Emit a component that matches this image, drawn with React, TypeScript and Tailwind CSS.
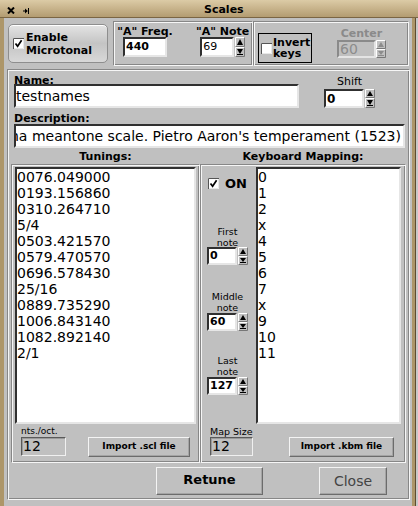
import React from 'react';

const down = 'border-2 border-t-[#303030] border-l-[#303030] border-r-[#e6e6e6] border-b-[#e6e6e6] bg-white';
const up = 'border border-t-[#f4f4f4] border-l-[#f4f4f4] border-r-[#6c6c6c] border-b-[#6c6c6c] shadow-[inset_-1px_-1px_0_#a4a4a4]';
const frame = 'border border-t-[#878787] border-l-[#878787] border-r-[#f6f6f6] border-b-[#f6f6f6] shadow-[inset_1px_1px_0_#f6f6f6,inset_-1px_-1px_0_#878787]';
const well = 'border border-t-[#5a5a5a] border-l-[#5a5a5a] border-r-[#f0f0f0] border-b-[#f0f0f0] shadow-[inset_1px_1px_0_#9a9a9a]';

const tunings = [
  '0076.049000',
  '0193.156860',
  '0310.264710',
  '5/4',
  '0503.421570',
  '0579.470570',
  '0696.578430',
  '25/16',
  '0889.735290',
  '1006.843140',
  '1082.892140',
  '2/1',
];
const keys = ['0', '1', '2', 'x', '4', '5', '6', '7', 'x', '9', '10', '11'];

function Check({ on = false }: { on?: boolean }) {
  return (
    <svg width="11" height="11" viewBox="0 0 11 11" className="shrink-0 block">
      <rect width="11" height="11" fill="#fff" />
      <path d="M0.5 11V0.5H11" stroke="#555" fill="none" />
      <path d="M10.5 1V10.5H1" stroke="#e8e8e8" fill="none" />
      {on && <path d="M2.5 5.5L4.6 8.3L8.6 2.2" stroke="#000" strokeWidth="1.7" fill="none" />}
    </svg>
  );
}

function Spin({ h = 19, dim = false }: { h?: number; dim?: boolean }) {
  const c = dim ? '#8c8c8c' : '#000';
  const m = Math.floor(h / 2);
  return (
    <svg width={10} height={h} viewBox={`0 0 10 ${h}`} className="shrink-0 block">
      <rect width="10" height={h} fill="#c0c0c0" />
      <path d={`M0.5 ${m}V0.5H9.5`} stroke="#fff" fill="none" />
      <path d={`M9.5 0.5V${m - 0.5}H0.5`} stroke="#777" fill="none" />
      <path d={`M0.5 ${h}V${m + 0.5}H9.5`} stroke="#fff" fill="none" />
      <path d={`M9.5 ${m + 0.5}V${h - 0.5}H0.5`} stroke="#777" fill="none" />
      <path d={`M5 2L8 ${m - 2}H2Z`} fill={c} />
      <path d={`M2 ${m + 2}H8L5 ${h - 3}Z`} fill={c} />
      <path d={`M2 ${h - 2.5}H8`} stroke={c} />
    </svg>
  );
}

function NoteBox({ label, value, top, inTop }: { label: string; value: string; top: string; inTop: string }) {
  return (
    <div className={`ml-[6px] w-[41px] flex flex-col items-center ${top}`}>
      <div className="text-[9.5px] leading-[11px] text-center">
        {label}
        <br />
        note
      </div>
      <div className={`flex items-start gap-[1px] ${inTop}`}>
        <div className={`w-[30px] h-[18px] ${down} flex items-center pl-[1px] text-[11px] font-bold`}>{value}</div>
        <Spin h={18} />
      </div>
    </div>
  );
}

export default function App() {
  return (
    <div className="w-[418px] h-[506px] flex flex-col overflow-hidden bg-[#ad9669] font-['DejaVu_Sans',sans-serif] text-black">
      {/* title bar */}
      <div className="h-[18px] shrink-0 flex items-start bg-gradient-to-b from-[#dccba6] to-[#b39c71] border-b border-[#7a6543]">
        <svg className="ml-[7px] mt-[7px] block" width="8" height="7" viewBox="0 0 8 7">
          <path d="M1 0.5L7 6.5M7 0.5L1 6.5" stroke="#000" strokeWidth="2" />
        </svg>
        <svg className="ml-[8px] mt-[8px] block" width="6" height="6" viewBox="0 0 6 6">
          <path d="M0 3H3" stroke="#000" />
          <path d="M2 0.5L4.8 3L2 5.5Z" fill="#000" />
          <path d="M5.5 0V6" stroke="#000" />
        </svg>
        <span className="ml-[175px] mt-[4px] text-[11px] font-bold leading-[11px]">Scales</span>
      </div>

      <div className="flex flex-1">
        <div className="w-[4px] bg-[#ad9669]" />
        <div className="w-[408px] bg-[#c0c0c0] flex flex-col">
          {/* top row */}
          <div className="flex items-start mt-[3px]">
            <div className="ml-[4px] mt-[3px] w-[100px] h-[39px] rounded-[5px] border border-[#8e8e8e] bg-gradient-to-b from-[#e4e4e4] via-[#c4c4c4] to-[#d8d8d8] shadow-[inset_0_1px_0_#fff] flex items-center pl-[4px]">
              <Check on />
              <div className="ml-[2px] text-[11px] font-bold leading-[13px]">
                Enable
                <br />
                Microtonal
              </div>
            </div>

            <div className={`ml-[5px] w-[140px] h-[45px] ${frame} flex items-start`}>
              <div className="ml-[9px] w-[44px] flex flex-col items-center">
                <div className="mt-[4px] h-[11px] leading-[11px] text-[11px] font-bold whitespace-nowrap">"A" Freq.</div>
                <div className={`w-[44px] h-[20px] ${down} flex items-center pl-[1px] text-[11px] font-bold`}>440</div>
              </div>
              <div className="ml-[29px] flex flex-col items-center">
                <div className="mt-[4px] h-[11px] leading-[11px] text-[11px] font-bold whitespace-nowrap">"A" Note</div>
                <div className="flex items-start gap-[1px]">
                  <div className={`w-[34px] h-[20px] ${down} flex items-center pl-[1px] text-[11px]`}>69</div>
                  <Spin h={20} />
                </div>
              </div>
            </div>

            <div className={`w-[156px] h-[45px] ${frame} flex items-start`}>
              <div className="ml-[4px] mt-[11px] w-[54px] h-[30px] border border-black flex items-center pl-[2px]">
                <Check />
                <div className="ml-[1px] text-[11px] font-bold leading-[11px]">
                  Invert
                  <br />
                  keys
                </div>
              </div>
              <div className="ml-[25px] flex flex-col items-center">
                <div className="mt-[6px] h-[11px] leading-[11px] text-[11px] font-bold text-[#8a8a8a]">Center</div>
                <div className="mt-[1px] flex items-start">
                  <div className="w-[39px] h-[18px] border-2 border-t-[#8a8a8a] border-l-[#8a8a8a] border-r-[#e4e4e4] border-b-[#e4e4e4] flex items-center pl-[1px] text-[14px] text-[#8c8c8c]">
                    60
                  </div>
                  <Spin h={18} dim />
                </div>
              </div>
            </div>
          </div>

          {/* main frame */}
          <div className={`ml-[3px] mt-[3px] w-[403px] h-[431px] ${frame} flex flex-col`}>
            <div className="flex items-start">
              <div className="ml-[6px] flex flex-col">
                <div className="mt-[5px] h-[9px] leading-[11px] text-[11px] font-bold">Name:</div>
                <div className={`w-[285px] h-[24px] ${down} flex items-center text-[14px]`}>testnames</div>
              </div>
              <div className="ml-[25px] flex flex-col items-center">
                <div className="mt-[6px] h-[11px] leading-[11px] text-[11px]">Shift</div>
                <div className="mt-[2px] flex items-start gap-[1px]">
                  <div className={`w-[40px] h-[19px] ${down} flex items-center pl-[1px] text-[12px] font-bold`}>0</div>
                  <Spin h={19} />
                </div>
              </div>
            </div>

            <div className="ml-[6px] mt-[5px] h-[9px] leading-[11px] text-[11px] font-bold">Description:</div>
            <div className={`ml-[6px] mt-[2px] w-[391px] h-[24px] ${down} flex items-center justify-end overflow-hidden whitespace-nowrap text-[14px] pr-[2px]`}>
              1/4-comma meantone scale. Pietro Aaron's temperament (1523)
            </div>

            <div className="mt-[3px] flex h-[11px] leading-[11px] text-[11px] font-bold">
              <div className="ml-[3px] w-[189px] text-center">Tunings:</div>
              <div className="w-[206px] text-center">Keyboard Mapping:</div>
            </div>

            <div className="mt-[2px] ml-[3px] flex">
              {/* tunings */}
              <div className={`w-[189px] h-[299px] ${frame} flex flex-col`}>
                <div className={`ml-[3px] mt-[2px] w-[181px] h-[257px] ${down} text-[14px] leading-[16px]`}>
                  {tunings.map((t, i) => (
                    <div key={i}>{t}</div>
                  ))}
                </div>
                <div className="flex items-start">
                  <div className="ml-[9px] flex flex-col">
                    <div className="mt-[3px] h-[10px] text-[9px] leading-[9px] whitespace-nowrap">nts./oct.</div>
                    <div className={`w-[45px] h-[19px] ${well} flex items-center pl-[1px] text-[14px]`}>12</div>
                  </div>
                  <div className={`ml-[22px] mt-[13px] w-[102px] h-[20px] ${up} flex items-center justify-center text-[9px] font-bold whitespace-nowrap`}>
                    Import .scl file
                  </div>
                </div>
              </div>

              {/* keyboard mapping */}
              <div className={`w-[206px] h-[299px] ${frame} flex flex-col`}>
                <div className="flex items-start">
                  <div className="w-[55px] flex flex-col">
                    <div className="mt-[12px] ml-[7px] flex items-center">
                      <Check on />
                      <span className="ml-[6px] text-[13px] font-bold leading-[13px]">ON</span>
                    </div>
                    <NoteBox label="First" value="0" top="mt-[36px]" inTop="mt-[-1px]" />
                    <NoteBox label="Middle" value="60" top="mt-[26px]" inTop="mt-0" />
                    <NoteBox label="Last" value="127" top="mt-[24px]" inTop="mt-0" />
                  </div>
                  <div className={`mt-[2px] w-[145px] h-[257px] ${down} text-[14px] leading-[16px]`}>
                    {keys.map((k, i) => (
                      <div key={i}>{k}</div>
                    ))}
                  </div>
                </div>
                <div className="flex items-start">
                  <div className="ml-[9px] flex flex-col">
                    <div className="mt-[3px] h-[10px] text-[9.5px] leading-[9px] whitespace-nowrap">Map Size</div>
                    <div className={`w-[43px] h-[19px] ${well} flex items-center pl-[1px] text-[14px]`}>12</div>
                  </div>
                  <div className={`ml-[36px] mt-[13px] w-[105px] h-[20px] ${up} flex items-center justify-center text-[9px] font-bold whitespace-nowrap`}>
                    Import .kbm file
                  </div>
                </div>
              </div>
            </div>

            <div className="mt-[4px] flex items-start">
              <div className={`ml-[148px] w-[107px] h-[28px] ${up} flex items-center justify-center text-[13px] font-bold pb-[2px]`}>
                Retune
              </div>
              <div className={`ml-[56px] w-[68px] h-[28px] ${up} flex items-center justify-center text-[14px] text-[#444]`}>
                Close
              </div>
            </div>
          </div>
        </div>
        <div className="w-[3px] bg-[#ad9669]" />
        <div className="w-[1px] bg-[#5e4d30]" />
        <div className="flex-1 bg-[#c8c8c8]" />
      </div>
    </div>
  );
}
